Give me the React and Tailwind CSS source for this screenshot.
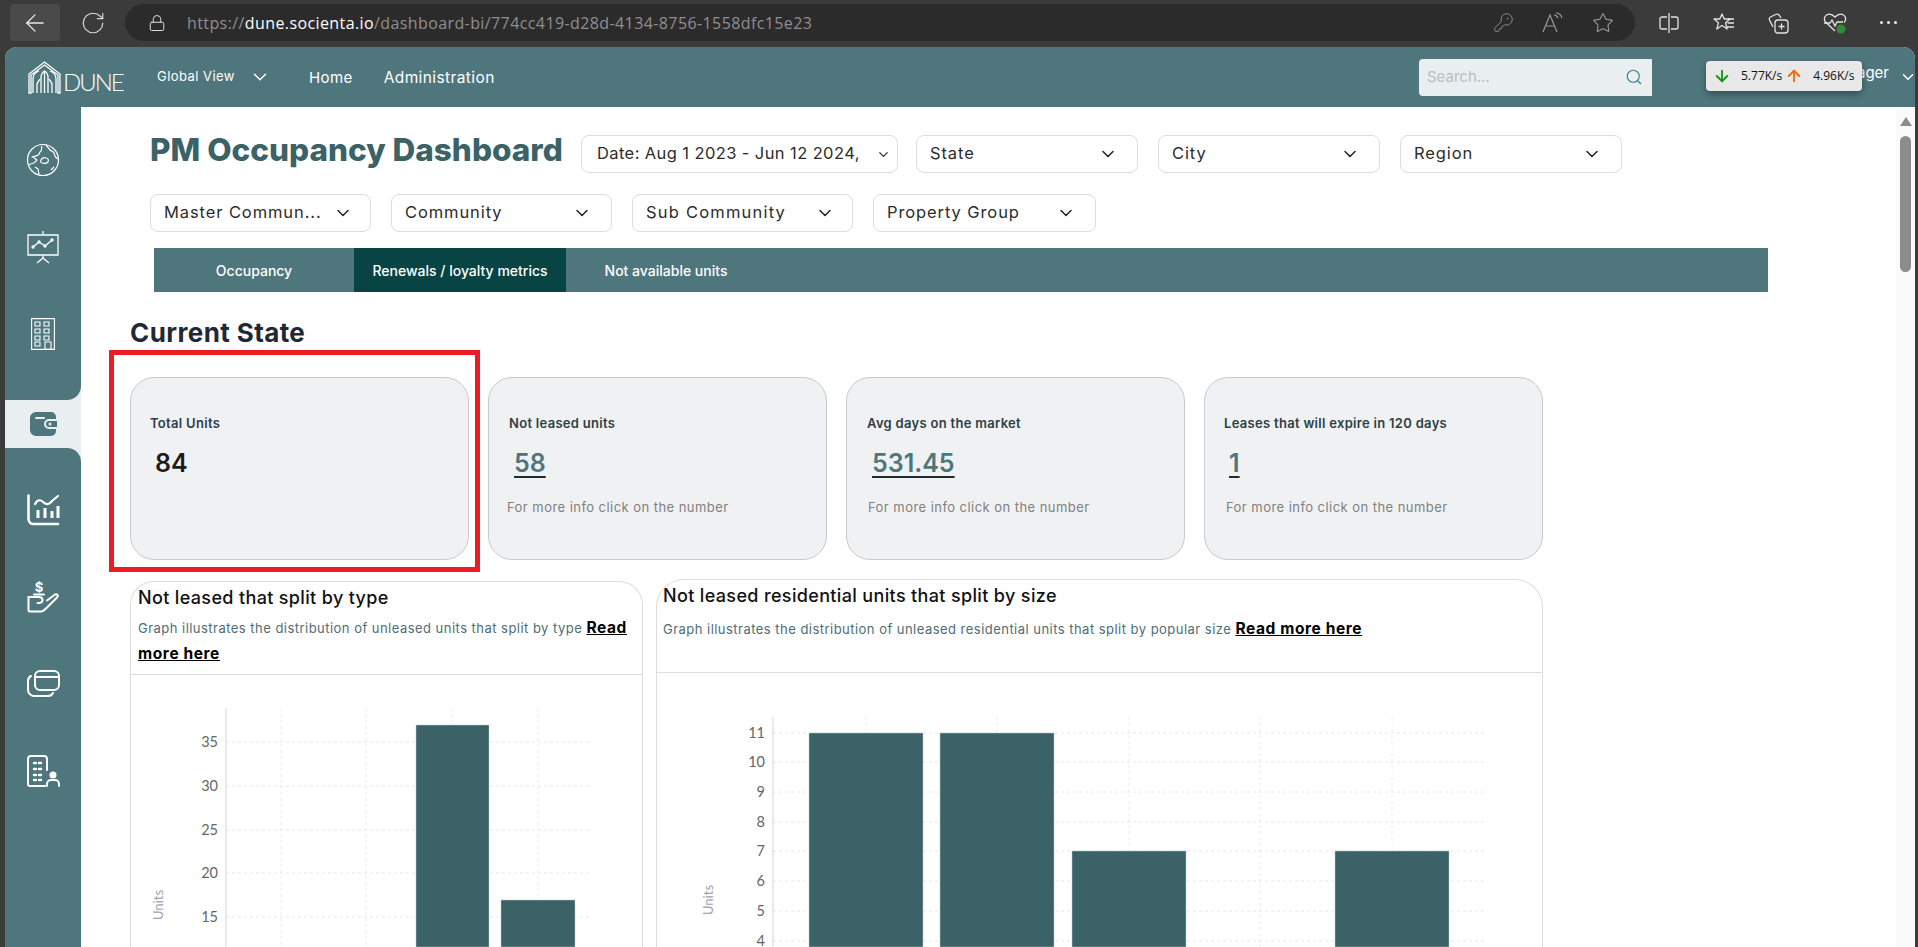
import React from 'react';
import { ArrowLeft, RotateCw, Lock, KeyRound, Star, ChevronDown, Search, ArrowDown, ArrowUp } from 'lucide-react';

const FONT = "font-['Inter','Open_Sans',sans-serif]";

const Logo = () => (
  <svg width="33" height="33" viewBox="0 0 33 33" fill="none" stroke="#fff" strokeWidth="1.3">
    <path d="M1 32V13L16.5 1 32 13v19h-2V14L16.5 4 3 14v18z" />
    <path d="M5 32V18c0-4 3-7 6-8M28 32V18c0-4-3-7-6-8" />
    <path d="M9 32v-8c0-3 2-4 3-6M24 32v-8c0-3-2-4-3-6" />
    <path d="M13 32V16c0-3 2-5 3.500-6 1.500 1 3.500 3 3.500 6v16M16.500 10v22" />
  </svg>
);

const GlobeIcon = () => (
  <svg width="34" height="34" viewBox="0 0 34 34" fill="none" stroke="#fff" strokeWidth="1.200" strokeLinejoin="round">
    <circle cx="17" cy="17" r="15.500" />
    <path d="M3 22c2-2 5-1 6-3l2-2c-2-1-3-3-5-3 2-1 4 0 6-2 2-1 1-3 3-4 1-1 0-3 1-5" />
    <path d="M20 2c1 2 3 3 4 5 1 1 3 1 4 3l1 3c1 2 3 3 4 3" />
    <path d="M15 17c1-2 3-3 5-2 2 0 3 2 2 4-1 1-3 2-5 1-2 0-3-1-2-3z" />
    <path d="M9 24l3 2 1 5M25 27l3-3" />
  </svg>
);

const BoardIcon = () => (
  <svg width="34" height="34" viewBox="0 0 34 34" fill="none" stroke="#fff" strokeWidth="1.3">
    <path d="M17 1v3M2 5h30v20H2zM2 25h30" />
    <path d="M7 17l6-5 6 4 7-6" />
    <circle cx="7" cy="17" r="1" fill="#fff" />
    <circle cx="13" cy="12" r="1" fill="#fff" />
    <circle cx="19" cy="16" r="1" fill="#fff" />
    <circle cx="26" cy="10" r="1" fill="#fff" />
    <path d="M17 25v3M17 28l-6 5M17 28l6 5" />
  </svg>
);

const TowerIcon = () => (
  <svg width="24" height="32" viewBox="0 0 24 32" fill="none" stroke="#fff" strokeWidth="1.1">
    <path d="M.6.6h22.800v30.800H.6z" />
    <path d="M4 4h5v4H4zM13 4h5v4h-5zM4 11h5v4H4zM13 11h5v4h-5zM4 18h5v4H4zM13 18h5v4h-5zM4 24h5v4H4zM14 24h6v7.400h-6z" />
  </svg>
);

const WalletIcon = () => (
  <svg width="27" height="24" viewBox="0 0 27 24">
    <path d="M6 0h15a5 5 0 0 1 5 5v2h-7a5 5 0 0 0 0 10h7v2a5 5 0 0 1-5 5H6a6 6 0 0 1-6-6V6a6 6 0 0 1 6-6z" fill="#4f767c" />
    <path d="M6 6h8" stroke="#e9eff0" strokeWidth="2" strokeLinecap="round" />
    <path d="M27 9h-8a3 3 0 0 0 0 6h8z" fill="#4f767c" />
    <circle cx="20" cy="12" r="1.500" fill="#e9eff0" />
  </svg>
);

const StatsIcon = () => (
  <svg width="33" height="32" viewBox="0 0 33 32" fill="none" stroke="#fff" strokeWidth="2.600" strokeLinecap="round" strokeLinejoin="round">
    <path d="M1.500 1.500V25a5 5 0 0 0 5 5H31" />
    <path d="M8 10c2-4 5-5 8-2s6 3 9-1l6-5" strokeWidth="2.200" />
    <path d="M11 16v8M18 14v10M25 17v7M31 12v12" strokeWidth="3" strokeLinecap="butt" />
  </svg>
);

const HandIcon = () => (
  <svg width="33" height="32" viewBox="0 0 33 32" fill="none" stroke="#fff" strokeWidth="2" strokeLinecap="round" strokeLinejoin="round" className="overflow-visible">
    <path d="M1.500 16h10c3 0 4 1 4 3s-2 3-4 3h-1" />
    <path d="M1.500 16v13a1.500 1.500 0 0 0 1.500 1.500h11c2 0 3-1 5-3l11-11c2-2 0-4-2-3l-8 6" />
    <text x="12" y="11" fontSize="13" fontWeight="700" fill="#fff" stroke="none" textAnchor="middle" fontFamily="Inter, sans-serif">$</text>
    <path d="M7 13.500h10" />
  </svg>
);

const CardsIcon = () => (
  <svg width="33" height="27" viewBox="0 0 33 27" fill="none" stroke="#fff" strokeWidth="2" strokeLinecap="round">
    <rect x="8" y="1" width="24" height="19" rx="5" />
    <path d="M8 7h24" />
    <path d="M4 6C2 7 1 9 1 11v9c0 3 3 6 6 6h14c2 0 4-1 5-3" />
  </svg>
);

const OfficeIcon = () => (
  <svg width="33" height="32" viewBox="0 0 33 32" fill="none" stroke="#fff" strokeWidth="2" strokeLinecap="round">
    <path d="M18 31H3a2 2 0 0 1-2-2V4a3 3 0 0 1 3-3h13a3 3 0 0 1 3 3v11" />
    <path d="M7 8h2M12 8h2M7 14h2M12 14h2M7 20h2M12 20h2M7 25h2M12 25h2" strokeWidth="2.400" />
    <circle cx="26" cy="20" r="3.500" fill="#fff" stroke="none" />
    <path d="M20 31v-2a4 4 0 0 1 4-4h4a4 4 0 0 1 4 4v2" />
  </svg>
);

const ReadAloudIcon = () => (
  <svg width="22" height="22" viewBox="0 0 22 22" fill="none" stroke="#9a9a9a" strokeWidth="1.200">
    <path d="M1 20L8 3l7 17M3.500 14h9" />
    <path d="M12 3c2 0 3 1 4 3M14 1c3 0 5 2 6 5" />
  </svg>
);

const SplitIcon = () => (
  <svg width="22" height="22" viewBox="0 0 22 22" fill="none" stroke="#e4e4e4" strokeWidth="1.300">
    <path d="M11 1v20M9 5H4a2 2 0 0 0-2 2v8a2 2 0 0 0 2 2h5M13 5h5a2 2 0 0 1 2 2v8a2 2 0 0 1-2 2h-5" />
  </svg>
);

const FavIcon = () => (
  <svg width="22" height="22" viewBox="0 0 22 22" fill="none" stroke="#e4e4e4" strokeWidth="1.300" strokeLinejoin="round">
    <path d="M9 2l2.200 5H17l-4.500 3.700 1.600 6.300L9 13.500 3.800 17l1.700-6.300L1 7h5.800z" />
    <path d="M15 7h6M14.500 11H21M14 15h7" />
  </svg>
);

const CollectionIcon = () => (
  <svg width="22" height="22" viewBox="0 0 22 22" fill="none" stroke="#e4e4e4" strokeWidth="1.300">
    <path d="M5 15L1.500 8c-.5-1.500 0-2.500 1-3l5-2.500c1-.5 2.500-.5 3.500.5l2 3" />
    <rect x="7" y="8" width="13" height="13" rx="3" />
    <path d="M13.500 11.500v6M10.500 14.500h6" />
  </svg>
);

const HealthIcon = () => (
  <svg width="24" height="22" viewBox="0 0 24 22" fill="none" stroke="#e4e4e4" strokeWidth="1.300">
    <path d="M12 19L3 10.500C.5 8 1 4.500 3.500 3c2.500-1.500 6-.5 8.500 2 2.500-2.500 6-3.500 8.500-2 2.500 1.500 3 5 .5 7.500" />
    <path d="M1 11h6l2-3 3 6 2-4h6" />
    <circle cx="18" cy="17" r="4.500" fill="#2e8b3a" stroke="none" />
  </svg>
);

const FilterSelect = ({ label, className, small }) => (
  <div className={`flex h-[38px] items-center justify-between rounded-lg border border-[#dcdcdc] bg-white text-[16.500px] text-[#2c2c2c] ${className}`}>
    <span className="whitespace-nowrap pb-[2px]">{label}</span>
    <ChevronDown size={small ? 15 : 20} strokeWidth={1.800} className="shrink-0 text-[#222]" />
  </div>
);

const KpiCard = ({ label, value, link, hint, padding, hintOffset }) => (
  <div className={`h-[183px] w-[339px] rounded-[24px] border border-[#c9c9c9] bg-[#f0f1f3] pt-[35px] ${padding}`}>
    <div className="text-[13px] font-semibold leading-[20px] tracking-[0.3px] text-[#2f3f44]">{label}</div>
    <div className={`ml-[5px] mt-[12px] text-[25px] font-semibold leading-[36px] ${link ? 'text-[#4f767c] underline decoration-[#1f2d30] decoration-2 underline-offset-4' : 'text-[#1c1c1c]'}`}>
      {value}
    </div>
    {hint && <div className={`mt-[16px] text-[13px] leading-[20px] tracking-[0.45px] text-[#808080] ${hintOffset}`}>For more info click on the number</div>}
  </div>
);

const ChartBox = ({ viewBox, width, height, yTicks, xTicks, axisX, top, gridEnd, bars, unitsX, unitsY }) => (
  <svg width={width} height={height} viewBox={viewBox} className="block">
    {xTicks.map((x) => (
      <line key={x} x1={x} x2={x} y1={top} y2="947" stroke="#ececec" strokeDasharray="3 3" />
    ))}
    {yTicks.map(([label, y]) => (
      <g key={label}>
        <line x1={axisX} x2={gridEnd} y1={y} y2={y} stroke="#e6e6e6" strokeDasharray="3 3" />
        <text x={axisX - 8} y={y + 5} textAnchor="end" fontSize="14.500" fill="#666" fontFamily="Lato, sans-serif">{label}</text>
      </g>
    ))}
    <line x1={axisX} x2={axisX} y1={top} y2="947" stroke="#e2e2e8" strokeWidth="1.500" />
    {bars.map(([x, w, y]) => (
      <rect key={x} x={x} y={y} width={w} height={947 - y} fill="#3b6266" stroke="#b9c9cb" strokeWidth="0.500" />
    ))}
    <text x={unitsX} y={unitsY} transform={`rotate(-90 ${unitsX} ${unitsY})`} textAnchor="middle" fontSize="13" fill="#a0a3ad" fontFamily="Lato, sans-serif">Units</text>
  </svg>
);

export default function App() {
  return (
    <div className={`flex h-[947px] w-[1918px] flex-col overflow-hidden bg-[#3b3b3b] ${FONT}`}>
      {/* browser chrome */}
      <div className="flex h-[47px] shrink-0 items-start pt-[4px] font-['Open_Sans',sans-serif]">
        <div className="ml-[10px] flex h-[37px] w-[50px] items-center justify-center rounded bg-[#4a4a4a]">
          <ArrowLeft size={28} strokeWidth={1.100} color="#e8e8e8" />
        </div>
        <div className="flex h-[37px] w-[65px] items-center justify-center">
          <RotateCw size={26} strokeWidth={1.100} color="#d8d8d8" />
        </div>
        <div className="flex h-[37px] w-[1510px] items-center rounded-full bg-[#2b2b2b] pl-[23px]">
          <Lock size={18} strokeWidth={1.300} color="#e0e0e0" />
          <div className="ml-[21px] whitespace-nowrap text-[16px] tracking-[0.4px] text-[#8f8f8f]">
            https://<span className="text-white">dune.socienta.io</span>/dashboard-bi/774cc419-d28d-4134-8756-1558dfc15e23
          </div>
          <div className="ml-auto flex items-center gap-[28px] pr-[21px]">
            <KeyRound size={21} strokeWidth={1.100} color="#8d8d8d" />
            <ReadAloudIcon />
            <Star size={22} strokeWidth={1.200} color="#9a9a9a" />
          </div>
        </div>
        <div className="flex h-[37px] flex-1 items-center justify-between pl-[23px] pr-[21px]">
          <SplitIcon />
          <FavIcon />
          <CollectionIcon />
          <HealthIcon />
          <div className="flex gap-[4px]">
            <span className="h-[3px] w-[3px] rounded-full bg-[#e8e8e8]" />
            <span className="h-[3px] w-[3px] rounded-full bg-[#e8e8e8]" />
            <span className="h-[3px] w-[3px] rounded-full bg-[#e8e8e8]" />
          </div>
        </div>
      </div>

      {/* app */}
      <div className="relative ml-[5px] mr-[3px] flex min-h-0 flex-1 flex-col overflow-hidden rounded-t-[12px] bg-white">
        <header className="flex h-[60px] shrink-0 items-center bg-[#4f767c] text-white">
          <div className="ml-[23px] flex w-[129px] items-end">
            <Logo />
            <span className="ml-[2px] font-['Lato',sans-serif] text-[24px] font-light leading-[24px] tracking-[-2px]">DUNE</span>
          </div>
          <div className="flex w-[152px] items-center text-[13px] tracking-[0.45px]">
            Global View
            <ChevronDown size={22} strokeWidth={1.500} className="ml-[14px]" />
          </div>
          <div className="pt-[2px] text-[15px] tracking-[0.4px]">Home</div>
          <div className="ml-[31px] pt-[2px] text-[15.500px] tracking-[0.4px]">Administration</div>
          <div className="ml-auto flex h-[37px] w-[233px] items-center justify-between rounded-l bg-[#e9eff0] pl-[8px] pr-[9px]">
            <span className="text-[15px] text-[#bdbdbd]">Search...</span>
            <Search size={18} strokeWidth={1.500} color="#3f7d92" />
          </div>
          <div className="mb-[7px] ml-[60px] w-[177px] text-right text-[15px]">Manager</div>
          <ChevronDown size={18} strokeWidth={2} className="-mr-[2px] ml-[10px]" />
        </header>

        {/* network speed overlay */}
        <div className="absolute left-[1701px] top-[14px] flex h-[30px] w-[156px] items-center rounded bg-[#e8e8e8] pl-[7px] font-['Open_Sans',sans-serif] text-[12px] text-[#111] shadow-[0_3px_6px_rgba(0,0,0,0.35)]">
          <ArrowDown size={18} strokeWidth={2.500} color="#109a10" />
          <span className="ml-[10px]">5.77K/s</span>
          <ArrowUp size={18} strokeWidth={2.500} color="#f06a0a" className="ml-[3px]" />
          <span className="ml-[10px]">4.96K/s</span>
        </div>

        <div className="flex min-h-0 flex-1">
          {/* sidebar */}
          <aside className="flex w-[76px] shrink-0 flex-col bg-[#e9eff0]">
            <div className="h-[293px] rounded-br-[14px] bg-[#4f767c] pt-[9px]">
              <div className="flex h-[87px] items-center justify-center"><GlobeIcon /></div>
              <div className="flex h-[87px] items-center justify-center"><BoardIcon /></div>
              <div className="flex h-[87px] items-center justify-center"><TowerIcon /></div>
            </div>
            <div className="flex h-[48px] items-center justify-center"><WalletIcon /></div>
            <div className="flex-1 rounded-tr-[14px] bg-[#4f767c] pt-[18px]">
              <div className="flex h-[87px] items-center justify-center"><StatsIcon /></div>
              <div className="flex h-[87px] items-center justify-center"><HandIcon /></div>
              <div className="flex h-[87px] items-center justify-center"><CardsIcon /></div>
              <div className="flex h-[87px] items-center justify-center"><OfficeIcon /></div>
            </div>
          </aside>

          {/* main */}
          <main className="relative min-w-0 flex-1 overflow-hidden bg-white">
            <div className="ml-[69px] mt-[28px] flex h-[38px] items-center">
              <h1 className="w-[431px] whitespace-nowrap pb-[8px] text-[31.500px] font-extrabold leading-[30px] text-[#3b6266]">PM Occupancy Dashboard</h1>
              <div className="flex gap-[20px]">
                <div className="mr-[-2px]"><FilterSelect label="Date: Aug 1 2023 - Jun 12 2024," className="w-[317px] pl-[15px] pr-[6px] tracking-[0.4px]" small /></div>
                <FilterSelect label="State" className="w-[222px] pl-[13px] pr-[19px] tracking-[0.9px]" />
                <FilterSelect label="City" className="w-[222px] pl-[13px] pr-[19px] tracking-[0.9px]" />
                <FilterSelect label="Region" className="w-[222px] pl-[13px] pr-[19px] tracking-[0.9px]" />
              </div>
            </div>
            <div className="ml-[69px] mt-[21px] flex gap-[20px]">
              <FilterSelect label="Master Commun..." className="w-[221px] pl-[13px] pr-[17px] tracking-[0.9px]" />
              <FilterSelect label="Community" className="w-[221px] pl-[13px] pr-[19px] tracking-[0.9px]" />
              <FilterSelect label="Sub Community" className="w-[221px] pl-[13px] pr-[17px] tracking-[1.2px]" />
              <FilterSelect label="Property Group" className="w-[223px] pl-[13px] pr-[19px] tracking-[0.9px]" />
            </div>

            <div className="ml-[73px] mt-[16px] flex h-[44px] w-[1614px] items-center bg-[#4f767c] text-[14px] font-medium text-white">
              <div className="flex h-full w-[200px] items-center justify-center">Occupancy</div>
              <div className="flex h-full w-[212px] items-center justify-center bg-[#084444]">Renewals / loyalty metrics</div>
              <div className="flex h-full w-[200px] items-center justify-center">Not available units</div>
            </div>

            <h2 className="ml-[49px] mt-[25px] text-[26px] font-bold leading-[32px] tracking-[0.4px] text-[#1f2933]">Current State</h2>

            <div className="ml-[49px] mt-[28px] flex gap-[19px]">
              <KpiCard label="Total Units" value="84" padding="pl-[19px]" />
              <KpiCard label="Not leased units" value="58" link hint padding="pl-[20px]" hintOffset="-ml-[2px]" />
              <KpiCard label="Avg days on the market" value="531.45" link hint padding="pl-[20px]" hintOffset="ml-[1px]" />
              <KpiCard label="Leases that will expire in 120 days" value="1" link hint padding="pl-[19px]" hintOffset="ml-[2px]" />
            </div>

            <div className="ml-[49px] flex items-start gap-[13px]">
              <section className="mt-[21px] w-[513px] rounded-t-[24px] border border-b-0 border-[#dddddd]">
                <div className="h-[93px] border-b border-[#dddddd] px-[7px] pt-[4px]">
                  <div className="text-[18px] font-medium leading-[24px] tracking-[0.35px] text-[#111]">Not leased that split by type</div>
                  <div className="mt-[5px] text-[13px] leading-[26px] tracking-[0.47px] text-[#4f6d75]">
                    Graph illustrates the distribution of unleased units that split by type <a className="text-[15.500px] font-bold tracking-[0.6px] text-black underline">Read more here</a>
                  </div>
                </div>
                <ChartBox
                  viewBox="131 675 511 272"
                  width={511}
                  height={272}
                  axisX={226}
                  top={708}
                  gridEnd={591}
                  xTicks={[281, 366, 452, 538]}
                  yTicks={[['35', 742], ['30', 786], ['25', 830], ['20', 873], ['15', 917]]}
                  bars={[[416, 73, 725], [501, 74, 900]]}
                  unitsX={163}
                  unitsY={905}
                />
              </section>
              <section className="mt-[19px] w-[887px] rounded-t-[28px] border border-b-0 border-[#dddddd]">
                <div className="h-[93px] border-b border-[#dddddd] px-[6px] pt-[4px]">
                  <div className="text-[18px] font-medium leading-[24px] tracking-[0.35px] text-[#111]">Not leased residential units that split by size</div>
                  <div className="mt-[8px] text-[13px] leading-[26px] tracking-[0.47px] text-[#4f6d75]">
                    Graph illustrates the distribution of unleased residential units that split by popular size <a className="text-[15.500px] font-bold tracking-[0.6px] text-black underline">Read more here</a>
                  </div>
                </div>
                <ChartBox
                  viewBox="657 673 885 274"
                  width={885}
                  height={274}
                  axisX={773}
                  top={717}
                  gridEnd={1485}
                  xTicks={[866, 997, 1129, 1260, 1392]}
                  yTicks={[['11', 733], ['10', 762], ['9', 792], ['8', 822], ['7', 851], ['6', 881], ['5', 911], ['4', 941]]}
                  bars={[[809, 114, 733], [940, 114, 733], [1072, 114, 851], [1335, 114, 851]]}
                  unitsX={713}
                  unitsY={900}
                />
              </section>
            </div>

            {/* highlight drawn over the first card */}
            <div className="absolute left-[28px] top-[243px] h-[222px] w-[371px] border-[5px] border-[#ed1c24]" />
          </main>

          {/* scrollbar */}
          <div className="flex w-[19px] shrink-0 flex-col items-center bg-[#fafafa] pt-[10px]">
            <div className="h-0 w-0 border-x-[6px] border-b-[9px] border-x-transparent border-b-[#8c8c8c]" />
            <div className="mt-[10px] h-[136px] w-[11px] rounded-full bg-[#8c8c8c]" />
          </div>
        </div>
      </div>
    </div>
  );
}
